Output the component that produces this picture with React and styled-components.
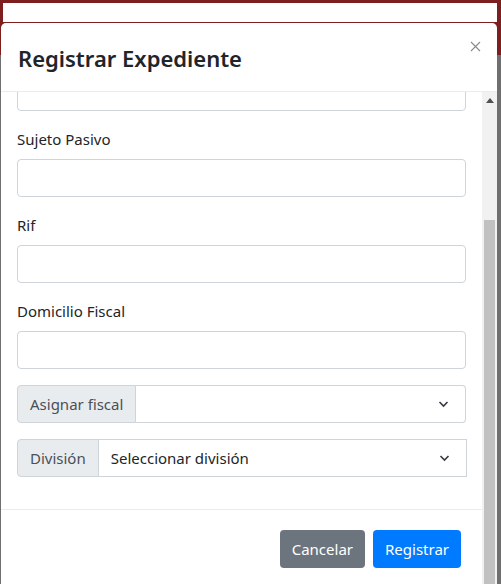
import React from 'react';
import styled, { createGlobalStyle } from 'styled-components';

const GlobalStyle = createGlobalStyle`
  html, body {
    margin: 0;
    padding: 0;
    background: #6f6f6f;
    font-family: 'Noto Sans', 'Open Sans', sans-serif;
    color: #212529;
    overflow: hidden;
  }
`;

const Page = styled.div`
  width: 501px;
  height: 584px;
  display: flex;
  flex-direction: column;
  overflow: hidden;
`;

const TopBar = styled.div`
  height: 19px;
  flex: none;
  background: #ffffff;
  border-top: 3px solid #7d1f1f;
  border-left: 3px solid #7d1f1f;
  border-right: 4px solid #7d1f1f;
  border-bottom: 1px solid #7d1f1f;
`;

const ModalRow = styled.div`
  flex: 1;
  min-height: 0;
  display: flex;
  padding: 0 4px 0 1px;
  background: linear-gradient(to bottom, #7d1f1f 0 32px, #6f6f6f 32px);
`;

const Modal = styled.div`
  flex: 1;
  display: flex;
  flex-direction: column;
  background: #ffffff;
  border-radius: 5px 5px 0 0;
  overflow: hidden;
`;

const Header = styled.div`
  flex: none;
  display: flex;
  justify-content: space-between;
  align-items: flex-start;
  padding: 17px 16px 15px 17px;
  border-bottom: 1px solid #e9ecef;
`;

const Title = styled.h5`
  margin: 0;
  font-size: 22px;
  line-height: 36px;
  font-weight: 600;
  color: #212529;
`;

const Close = styled.button`
  border: 0;
  background: transparent;
  padding: 0;
  margin: -4px 0 0 0;
  width: 12px;
  height: 20px;
  display: flex;
  align-items: center;
  justify-content: center;
  cursor: pointer;
`;

const Scrolling = styled.div`
  flex: 1;
  min-height: 0;
  display: flex;
`;

const Content = styled.div`
  flex: 1;
  display: flex;
  flex-direction: column;
  min-width: 0;
`;

const Body = styled.div`
  flex: none;
  height: 417px;
  overflow: hidden;
  padding: 0 16px;
`;

const Scrolled = styled.div`
  margin-top: -19px;
  display: flex;
  flex-direction: column;
  gap: 16px;
`;

const FormGroup = styled.div`
  display: flex;
  flex-direction: column;
  gap: 8px;
`;

const Label = styled.label`
  font-size: 15px;
  line-height: 24px;
  color: #212529;
`;

const Input = styled.input`
  box-sizing: border-box;
  height: 38px;
  width: 100%;
  border: 1px solid #ced4da;
  border-radius: 4px;
  padding: 6px 12px;
  font: inherit;
  font-size: 15px;
  color: #495057;
  background: #ffffff;
`;

const InputGroup = styled.div`
  display: flex;
  height: 38px;
  margin-right: ${(p) => (p.$wide ? '-1px' : '0')};
`;

const Prepend = styled.span`
  box-sizing: border-box;
  display: flex;
  align-items: center;
  padding: 0 12px;
  background: #e9ecef;
  border: 1px solid #ced4da;
  border-radius: 4px 0 0 4px;
  font-size: 15px;
  color: #495057;
  white-space: nowrap;
`;

const Select = styled.div`
  flex: 1;
  box-sizing: border-box;
  display: flex;
  align-items: center;
  justify-content: space-between;
  padding: 0 16px 0 12px;
  border: 1px solid #ced4da;
  border-left: 0;
  border-radius: ${(p) => (p.$square ? '0' : '0 4px 4px 0')};
  font-size: 15px;
  color: #212529;
  background: #ffffff;
`;

const Footer = styled.div`
  flex: none;
  display: flex;
  justify-content: flex-end;
  gap: 8px;
  padding: 20px 21px 20px 16px;
  border-top: 1px solid #e9ecef;
`;

const Button = styled.button`
  height: 38px;
  padding: 0 12px;
  border: 0;
  border-radius: 4px;
  font-family: inherit;
  font-size: 15px;
  color: #ffffff;
  background: ${(p) => (p.$primary ? '#007bff' : '#6c757d')};
  cursor: pointer;
`;

const Scrollbar = styled.div`
  flex: none;
  width: 15px;
  display: flex;
  flex-direction: column;
  align-items: center;
  background: #f1f1f1;
`;

const Arrow = styled.div`
  flex: none;
  height: 17px;
  display: flex;
  align-items: center;
  justify-content: center;
`;

const Thumb = styled.div`
  flex: none;
  width: 11px;
  margin-top: 111px;
  height: 400px;
  background: #c1c1c1;
`;

const Chevron = () => (
  <svg width="11" height="8" viewBox="0 0 11 8">
    <path d="M1.5 2 L5.5 6 L9.5 2" fill="none" stroke="#343a40" strokeWidth="1.6" />
  </svg>
);

const fields = ['Sujeto Pasivo', 'Rif', 'Domicilio Fiscal'];

const App = () => (
  <>
    <GlobalStyle />
    <Page>
      <TopBar />
      <ModalRow>
        <Modal>
          <Header>
            <Title>Registrar Expediente</Title>
            <Close aria-label="Cerrar">
              <svg width="11" height="11" viewBox="0 0 11 11">
                <path d="M1 1 L10 10 M10 1 L1 10" stroke="#8a8a8a" strokeWidth="1.1" />
              </svg>
            </Close>
          </Header>
          <Scrolling>
            <Content>
              <Body>
                <Scrolled>
                  <Input />
                  {fields.map((f) => (
                    <FormGroup key={f}>
                      <Label>{f}</Label>
                      <Input />
                    </FormGroup>
                  ))}
                  <InputGroup>
                    <Prepend>Asignar fiscal</Prepend>
                    <Select>
                      <span />
                      <Chevron />
                    </Select>
                  </InputGroup>
                  <InputGroup $wide>
                    <Prepend>División</Prepend>
                    <Select $square>
                      <span>Seleccionar división</span>
                      <Chevron />
                    </Select>
                  </InputGroup>
                </Scrolled>
              </Body>
              <Footer>
                <Button>Cancelar</Button>
                <Button $primary>Registrar</Button>
              </Footer>
            </Content>
            <Scrollbar>
              <Arrow>
                <svg width="8" height="5" viewBox="0 0 8 5">
                  <path d="M0 5 L4 0 L8 5 Z" fill="#505050" />
                </svg>
              </Arrow>
              <Thumb />
            </Scrollbar>
          </Scrolling>
        </Modal>
      </ModalRow>
    </Page>
  </>
);

export default App;
